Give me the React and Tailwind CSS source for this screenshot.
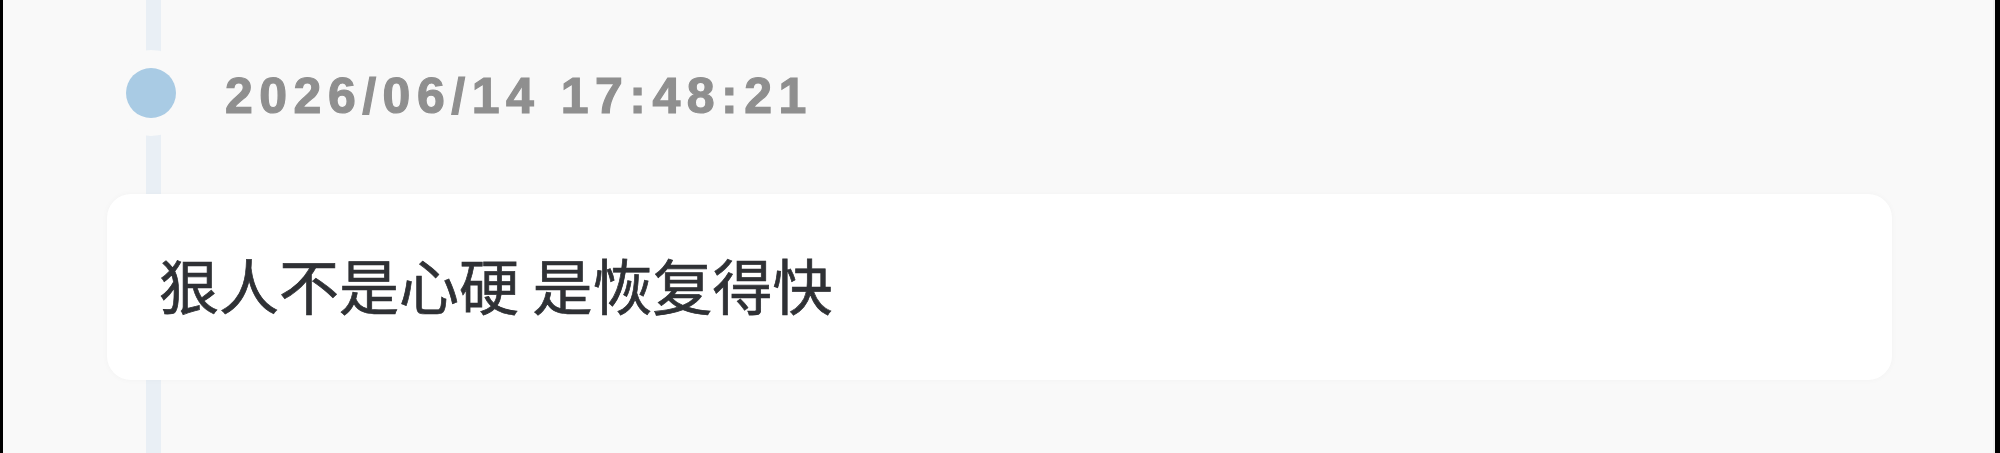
import React from "react";

const TimelineItem = ({ time, text }) => {
  return (
    <div className="relative flex-1 bg-[#f9f9f9] overflow-hidden">
      {/* rail behind the content */}
      <div className="absolute left-[143px] top-0 bottom-0 w-[15px] bg-[#e9eff5]"></div>

      <div className="relative flex items-start pt-[68px]">
        <span className="ml-[123px] w-[50px] h-[50px] rounded-full bg-[#a9cbe4] ring-[18px] ring-[#f9f9f9] shrink-0"></span>
        <span
          className="ml-[49px] mt-[3px] text-[50px] leading-[50px] font-bold tracking-[6.5px] text-[#8f8f8f] [-webkit-text-stroke:1.2px_#8f8f8f]"
          style={{ fontFamily: '"Liberation Sans", Arial, sans-serif' }}
        >
          {time}
        </span>
      </div>

      <div className="relative ml-[104px] mr-[101px] mt-[73px] h-[186px] rounded-[24px] bg-white shadow-[0_0_6px_rgba(0,0,0,0.03)] flex items-center pl-[52px] pb-[7px]">
        <p
          className="text-[60px] leading-none font-normal text-[#2f3135] [-webkit-text-stroke:0.7px_#2f3135]"
          style={{ fontFamily: '"Noto Sans CJK SC", "Noto Sans", sans-serif' }}
        >
          {text}
        </p>
      </div>
    </div>
  );
};

export default function App() {
  return (
    <div className="w-[2000px] h-[453px] flex bg-black">
      <div className="w-[3px] bg-black"></div>
      <TimelineItem time="2026/06/14 17:48:21" text="狠人不是心硬 是恢复得快" />
      <div className="w-[2px] bg-[#f0f0f0]"></div>
      <div className="w-[5px] bg-black"></div>
    </div>
  );
}
